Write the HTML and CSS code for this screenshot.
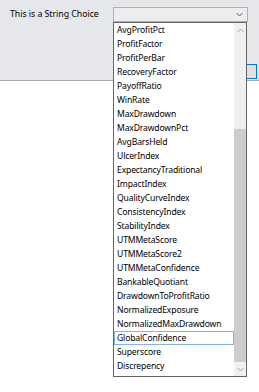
FILE: index.html
```html
<!DOCTYPE html>
<html>
<head>
<meta charset="utf-8">
<link rel="stylesheet" href="styles.css">
</head>
<body>
<div class="panel">
  <div class="row">
    <span class="label">This is a String Choice</span>
    <div class="combo">
      <svg class="chev" width="7" height="5" viewBox="0 0 7 5"><path d="M0.5 1 L3.5 4 L6.5 1" fill="none" stroke="#5a5a5a" stroke-width="1"/></svg>
    </div>
  </div>
  <div class="btnrow"><div class="btn"></div></div>
</div>
<div class="list">
  <div class="items">
    <div class="item">AvgProfitPct</div>
    <div class="item">ProfitFactor</div>
    <div class="item">ProfitPerBar</div>
    <div class="item">RecoveryFactor</div>
    <div class="item">PayoffRatio</div>
    <div class="item">WinRate</div>
    <div class="item">MaxDrawdown</div>
    <div class="item">MaxDrawdownPct</div>
    <div class="item">AvgBarsHeld</div>
    <div class="item">UlcerIndex</div>
    <div class="item">ExpectancyTraditional</div>
    <div class="item">ImpactIndex</div>
    <div class="item">QualityCurveIndex</div>
    <div class="item">ConsistencyIndex</div>
    <div class="item">StabilityIndex</div>
    <div class="item">UTMMetaScore</div>
    <div class="item">UTMMetaScore2</div>
    <div class="item">UTMMetaConfidence</div>
    <div class="item">BankableQuotiant</div>
    <div class="item">DrawdownToProfitRatio</div>
    <div class="item">NormalizedExposure</div>
    <div class="item">NormalizedMaxDrawdown</div>
    <div class="item selected">GlobalConfidence</div>
    <div class="item">Superscore</div>
    <div class="item">Discrepency</div>
  </div>
  <div class="scrollbar">
    <div class="arrow">
      <svg width="7" height="5" viewBox="0 0 7 5"><path d="M0.5 4 L3.5 1 L6.5 4" fill="none" stroke="#a6a6a6" stroke-width="1"/></svg>
    </div>
    <div class="track"></div>
    <div class="thumb"></div>
    <div class="arrow">
      <svg width="7" height="5" viewBox="0 0 7 5"><path d="M0.5 1 L3.5 4 L6.5 1" fill="none" stroke="#a6a6a6" stroke-width="1"/></svg>
    </div>
  </div>
</div>
</body>
</html>
```
FILE: styles.css
```css
html, body {
  margin: 0;
  padding: 0;
  background: #ffffff;
  font-family: "Noto Sans", "DejaVu Sans", sans-serif;
  color: #000000;
}
body {
  width: 259px;
  height: 392px;
  overflow: hidden;
  position: relative;
}
.panel {
  height: 81px;
  box-sizing: border-box;
  background: #e6e7ea;
  border-bottom: 1px solid #a9a9ab;
  padding-top: 7px;
  display: flex;
  flex-direction: column;
}
.row {
  display: flex;
  align-items: center;
  height: 15px;
}
.label {
  width: 103px;
  padding-left: 10px;
  font-size: 8.8px;
  letter-spacing: -0.05px;
  line-height: 15px;
  margin-top: -1px;
}
.combo {
  width: 135px;
  height: 15px;
  box-sizing: border-box;
  background: #ededed;
  border: 1px solid #b0b0b0;
  display: flex;
  align-items: center;
  justify-content: flex-end;
  padding-right: 4px;
}
.chev {
  display: block;
}
.btnrow {
  display: flex;
  justify-content: flex-end;
  margin-top: 42px;
  padding-right: 2px;
}
.btn {
  width: 11px;
  height: 15px;
  box-sizing: border-box;
  background: #e1e1e1;
  border: 1px solid #0078d7;
}
.list {
  position: absolute;
  left: 113px;
  top: 22px;
  width: 134px;
  height: 355px;
  box-sizing: border-box;
  background: #ffffff;
  border: 1px solid #646464;
  display: flex;
}
.items {
  flex: 1;
}
.item {
  height: 14px;
  line-height: 14px;
  font-size: 8.6px;
  letter-spacing: -0.15px;
  padding-left: 3px;
  box-sizing: border-box;
  white-space: nowrap;
}
.item.selected {
  border: 1px solid #7eb4ea;
  padding-left: 2px;
  line-height: 12px;
}
.scrollbar {
  width: 12px;
  display: flex;
  flex-direction: column;
  background: #f0f0f0;
}
.arrow {
  height: 14px;
  display: flex;
  align-items: center;
  justify-content: center;
}
.track {
  height: 92px;
}
.thumb {
  height: 233px;
  background: #cdcdcd;
}
```
